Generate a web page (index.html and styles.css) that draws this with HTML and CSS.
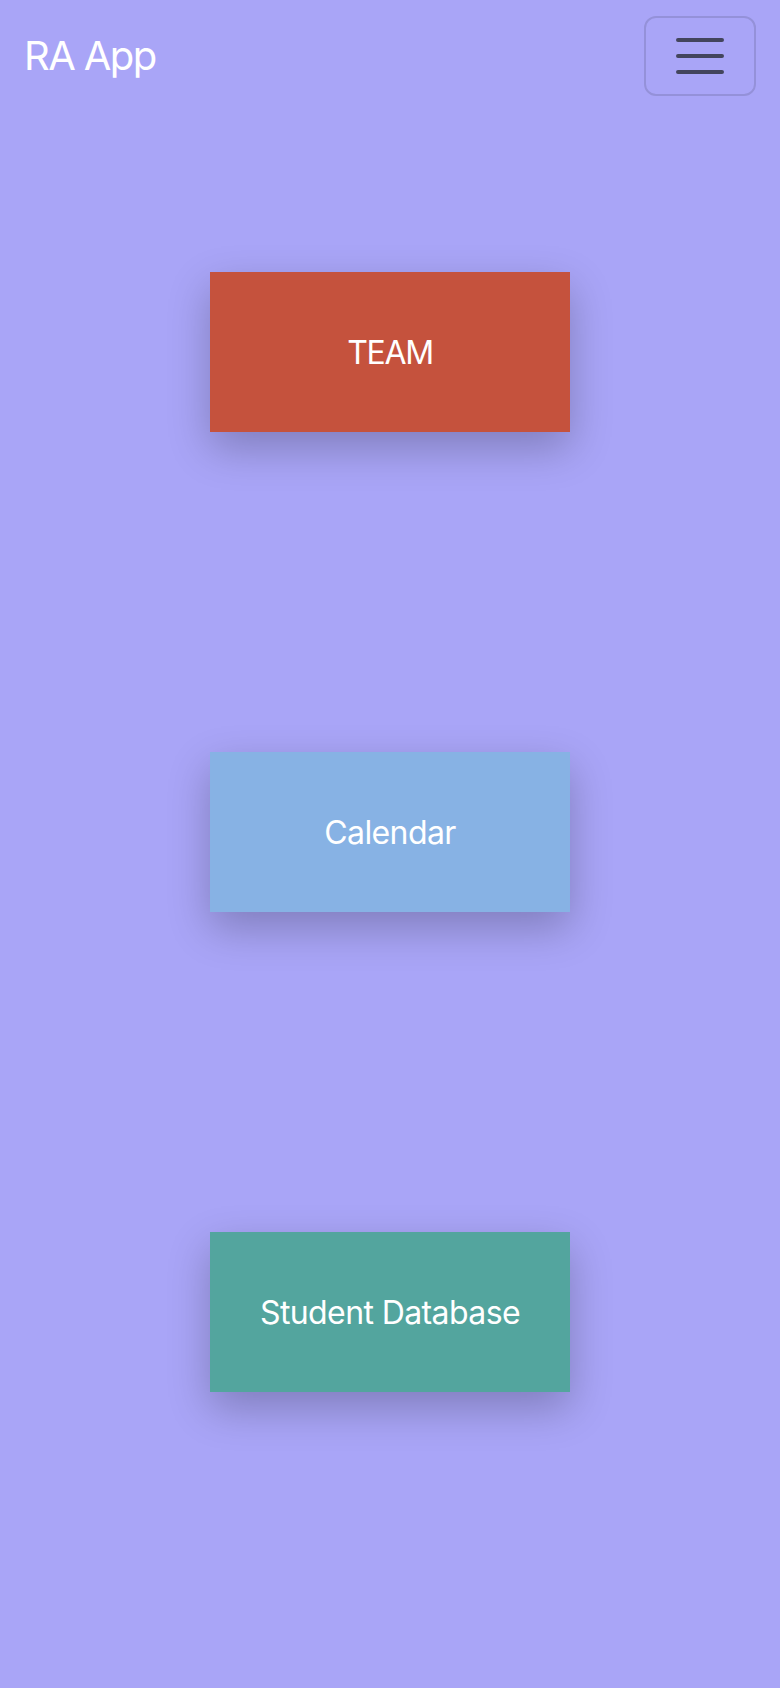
FILE: index.html
```html
<!DOCTYPE html>
<html lang="en">
<head>
<meta charset="utf-8">
<title>RA App</title>
<link rel="stylesheet" href="styles.css">
</head>
<body>
<nav class="navbar">
  <a class="brand" href="#">RA App</a>
  <button class="toggler" type="button" aria-label="Toggle navigation">
    <svg class="toggler-icon" viewBox="0 0 30 30" xmlns="http://www.w3.org/2000/svg">
      <path d="M4 7h22M4 15h22M4 23h22" stroke="rgba(33,37,41,0.75)" stroke-width="2" stroke-linecap="round" fill="none"/>
    </svg>
  </button>
</nav>
<main class="tiles">
  <a class="tile tile-team" href="#">TEAM</a>
  <a class="tile tile-calendar" href="#">Calendar</a>
  <a class="tile tile-students" href="#">Student Database</a>
</main>
</body>
</html>
```
FILE: styles.css
```css
html, body {
  margin: 0;
  padding: 0;
}
body {
  background: #a9a5f7;
  font-family: Inter, "Noto Sans", "Liberation Sans", sans-serif;
  min-height: 1688px;
}
.navbar {
  display: flex;
  align-items: center;
  justify-content: space-between;
  padding: 16px 24px;
}
.brand {
  color: #fff;
  text-decoration: none;
  font-size: 40px;
  line-height: 60px;
  letter-spacing: -1.6px;
  padding: 10px 0;
}
.toggler {
  box-sizing: border-box;
  width: 112px;
  height: 80px;
  padding: 8px 24px;
  border: 2px solid rgba(0, 0, 0, 0.12);
  border-radius: 12px;
  background: transparent;
  display: flex;
  align-items: center;
  justify-content: center;
}
.toggler-icon {
  width: 60px;
  height: 60px;
  display: block;
}
.tiles {
  display: flex;
  flex-direction: column;
  align-items: center;
  padding-top: 160px;
  gap: 320px;
}
.tile {
  width: 360px;
  height: 160px;
  display: flex;
  align-items: center;
  justify-content: center;
  color: #fff;
  text-decoration: none;
  font-size: 32px;
  letter-spacing: -0.6px;
  box-shadow: 0 16px 40px rgba(0, 0, 0, 0.24);
}
.tile-team { background: #c5523d; letter-spacing: -1.4px; }
.tile-calendar { background: #87b2e4; }
.tile-students { background: #53a59e; }
```
